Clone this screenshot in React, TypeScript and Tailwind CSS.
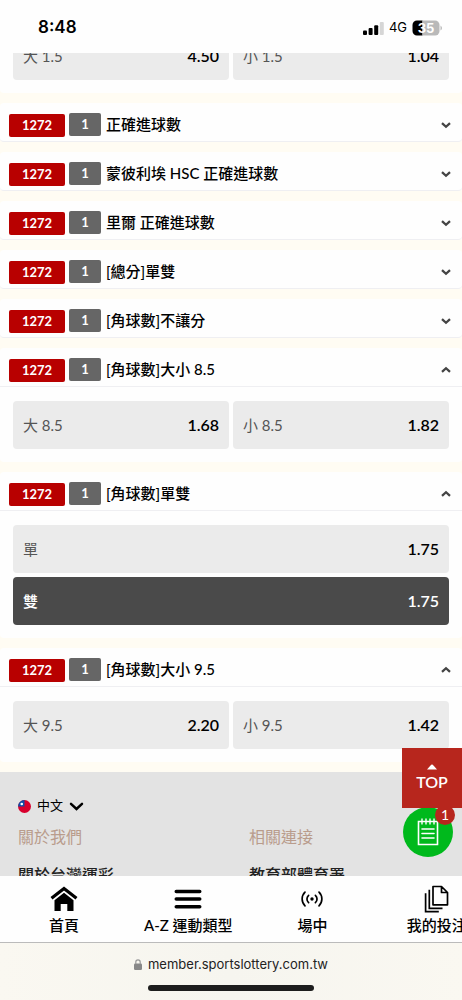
import React from "react";

type Option = { label: string; odds: string; selected?: boolean };
type Market = { title: string; options?: Option[]; stacked?: boolean };

const markets: Market[] = [
  { title: "正確進球數" },
  { title: "蒙彼利埃 HSC 正確進球數" },
  { title: "里爾 正確進球數" },
  { title: "[總分]單雙" },
  { title: "[角球數]不讓分" },
  {
    title: "[角球數]大小 8.5",
    options: [
      { label: "大 8.5", odds: "1.68" },
      { label: "小 8.5", odds: "1.82" },
    ],
  },
  {
    title: "[角球數]單雙",
    stacked: true,
    options: [
      { label: "單", odds: "1.75" },
      { label: "雙", odds: "1.75", selected: true },
    ],
  },
  {
    title: "[角球數]大小 9.5",
    options: [
      { label: "大 9.5", odds: "2.20" },
      { label: "小 9.5", odds: "1.42" },
    ],
  },
];

function StatusBar() {
  return (
    <header className="flex h-[53px] shrink-0 items-center justify-between bg-[#fefefe] pt-[3px] pr-5 pl-[38px] font-['Inter',sans-serif]">
      <span className="text-[17px] font-semibold text-black">8:48</span>
      <div className="flex items-center gap-[5px]">
        <svg width="21" height="13" viewBox="0 0 21 13" aria-hidden="true">
          <rect x="0" y="8.5" width="4" height="4.5" rx="1" />
          <rect x="5.6" y="6" width="4" height="7" rx="1" />
          <rect x="11.2" y="3.2" width="4" height="9.8" rx="1" />
          <rect x="16.8" y="0" width="4" height="13" rx="1" fill="#d6d6d6" />
        </svg>
        <span className="text-[13px] text-black">4G</span>
        <svg width="30" height="16" viewBox="0 0 30 16" role="img" aria-label="35%">
          <path d="M5 .5h5.500v15H5A4.500 4.500 0 0 1 .5 11V5A4.500 4.500 0 0 1 5 .5z" fill="#000" />
          <path d="M10.500.5H23A4.500 4.500 0 0 1 27.500 5v6a4.500 4.500 0 0 1-4.500 4.500H10.500z" fill="#b9b9b9" />
          <path d="M28.500 5.500q1.500 1 1.500 2.500t-1.500 2.500z" fill="#b9b9b9" />
          <text x="14" y="12.600" textAnchor="middle" fontSize="13" fontWeight="700" fill="#fff">
            35
          </text>
        </svg>
      </div>
    </header>
  );
}

function Chevron({ up = false }: { up?: boolean }) {
  return (
    <svg width="10" height="8" viewBox="0 0 10 8" fill="none" stroke="#444" strokeWidth="2.300" aria-hidden="true">
      <path d={up ? "M1 5.800 5 2.200 9 5.800" : "M1 2.200 5 5.800 9 2.200"} />
    </svg>
  );
}

function Options({ options, stacked }: { options: Option[]; stacked?: boolean }) {
  return (
    <div className={`grid gap-1 px-[13px] pb-[13px] ${stacked ? "grid-cols-1" : "grid-cols-2"}`}>
      {options.map((o) => (
        <button
          key={o.label}
          type="button"
          className={`flex h-12 items-center justify-between rounded px-2.5 text-[15px] ${
            o.selected ? "bg-[#4a4a4a] font-medium text-white" : "bg-[#ebebeb] text-[#555]"
          }`}
        >
          <span>{o.label}</span>
          <span className={`text-base font-semibold ${o.selected ? "text-white" : "text-black"}`}>{o.odds}</span>
        </button>
      ))}
    </div>
  );
}

function MarketCard({ market }: { market: Market }) {
  const open = Boolean(market.options);
  return (
    <section className="rounded bg-[#fefefe]">
      <button
        type="button"
        aria-expanded={open}
        className={`flex h-[39px] w-full items-center border-b border-[#efeff2] pt-[5px] pr-[11px] pl-[9px] ${open ? "" : "rounded"}`}
      >
        <span className="mt-0.5 flex h-[23px] w-14 items-center justify-center rounded-xs bg-[#b80000] text-[13px] font-bold text-white">
          1272
        </span>
        <span className="ml-1 flex h-[23px] w-8 items-center justify-center rounded-xs bg-[#666] text-[13px] font-bold text-white">
          1
        </span>
        <span className="ml-[5px] flex-1 text-left text-[15px] font-medium text-black">{market.title}</span>
        <Chevron up={open} />
      </button>
      {market.options && (
        <div className="pt-3.5">
          <Options options={market.options} stacked={market.stacked} />
        </div>
      )}
    </section>
  );
}

function SiteFooter() {
  return (
    <footer className="bg-[#e3e3e3] pt-6 pb-10">
      <button type="button" className="ml-[18px] flex h-5 items-center text-[13px] text-black">
        <svg width="13" height="13" viewBox="0 0 26 26" aria-hidden="true">
          <circle cx="13" cy="13" r="13" fill="#d8002d" />
          <path d="M0 13A13 13 0 0 1 13 0v13z" fill="#0f4fa8" />
          <circle cx="7.500" cy="8" r="2.600" fill="#fff" />
        </svg>
        <span className="mx-1.5">中文</span>
        <svg width="15" height="9" viewBox="0 0 15 9" fill="none" stroke="#000" strokeWidth="2.500" strokeLinecap="round" aria-hidden="true">
          <path d="M2 1.800 7.500 7 13 1.800" />
        </svg>
      </button>
      <div className="mt-[9px] grid grid-cols-2 text-base leading-6">
        <div className="px-[18px]">
          <h2 className="text-[#b99c8c]">關於我們</h2>
          <a href="#about" className="mt-3.5 block font-medium text-[#222]">關於台灣運彩</a>
        </div>
        <div className="px-[18px]">
          <h2 className="text-[#b99c8c]">相關連接</h2>
          <a href="#links" className="mt-3.5 block font-medium text-[#222]">教育部體育署</a>
        </div>
      </div>
    </footer>
  );
}

function FloatingActions() {
  return (
    <>
      <button
        type="button"
        aria-label="投注單"
        className="absolute right-[9px] bottom-[19px] flex size-[50px] items-center justify-center rounded-full bg-[#00b91c]"
      >
        <svg width="22" height="28" viewBox="0 0 22 28" fill="none" stroke="#fff" strokeWidth="1.600" aria-hidden="true">
          <path d="M1.500 3.500h19v23h-19z" />
          <path d="M5 .5v6M9 .5v6M13 .5v6M17 .5v6" strokeWidth="1.400" />
          <path d="M5 11h12M5 15.500h12M5 20h12" strokeLinecap="round" />
        </svg>
        <span className="absolute -top-0.5 -right-0.5 flex size-5 items-center justify-center rounded-full bg-[#b7261d] text-sm text-white">
          1
        </span>
      </button>
      <a
        href="#top"
        className="absolute right-0 bottom-[68px] flex size-[60px] flex-col items-center justify-center bg-[#b7261d] pt-0.5 text-base leading-6 font-semibold text-white"
      >
        <svg width="10" height="6" viewBox="0 0 10 6" fill="#fff" aria-hidden="true">
          <path d="M0 5.500 4.200.8q.8-.8 1.600 0L10 5.500z" />
        </svg>
        TOP
      </a>
    </>
  );
}

const navItems = [
  {
    label: "首頁",
    icon: (
      <svg width="28" height="26" viewBox="0 0 28 26" aria-hidden="true">
        <path d="M1.500 12.300 14 2.600l12.500 9.700" fill="none" stroke="#000" strokeWidth="3.200" />
        <path d="M4.500 14.200 14 6.800l9.500 7.400V25h-6.200v-7h-6.600v7H4.500z" />
      </svg>
    ),
  },
  {
    label: "A-Z 運動類型",
    icon: (
      <svg width="28" height="26" viewBox="0 0 28 26" stroke="#000" strokeWidth="3.600" strokeLinecap="round" aria-hidden="true">
        <path d="M2.300 5.500h23.400M2.300 13h23.400M2.300 20.700h23.400" />
      </svg>
    ),
  },
  {
    label: "場中",
    icon: (
      <svg width="28" height="26" viewBox="0 0 28 26" fill="none" stroke="#000" strokeWidth="1.700" strokeLinecap="round" aria-hidden="true">
        <circle cx="14" cy="13" r="1.700" fill="#000" stroke="none" />
        <path d="M10.600 9.300a5 5 0 0 0 0 7.400M17.400 9.300a5 5 0 0 1 0 7.400M7 6.200a9.500 9.500 0 0 0 0 13.600M21 6.200a9.500 9.500 0 0 1 0 13.600" />
      </svg>
    ),
  },
  {
    label: "我的投注",
    icon: (
      <svg width="28" height="28" viewBox="0 0 28 28" fill="none" stroke="#000" strokeWidth="1.700" aria-hidden="true">
        <path d="M10 1.500h8.500l6 6v12.300H10zM18.500 1.500v6h6" strokeLinejoin="round" />
        <path d="M6.300 4.800v18.500h13.200M2.600 8.200v18.500h13.200" />
      </svg>
    ),
  },
];

function BottomNav() {
  return (
    <nav className="flex h-[67px] shrink-0 overflow-hidden border-b border-[#bbb] bg-[#fefefe] pl-0.5">
      {navItems.map((item) => (
        <a
          key={item.label}
          href="#nav"
          className="flex w-[27%] shrink-0 flex-col items-center pt-[9px] text-[15px] leading-6 font-medium whitespace-nowrap text-black"
        >
          <span className="flex h-7 items-center">{item.icon}</span>
          {item.label}
        </a>
      ))}
    </nav>
  );
}

function BrowserBar() {
  return (
    <div className="flex h-[57px] shrink-0 flex-col items-center bg-linear-to-r from-[#faf8f1] via-[#f6f5ef] to-[#faf8f1] pt-[11px] font-['Inter',sans-serif]">
      <div className="flex items-center gap-1.5 text-[13px] leading-5 text-[#222]">
        <svg width="8" height="11" viewBox="0 0 8 11" aria-hidden="true">
          <rect x="0" y="4.600" width="8" height="6.400" rx="1.200" fill="#888" />
          <path d="M1.800 5V3a2.200 2.200 0 0 1 4.400 0v2" fill="none" stroke="#999" strokeWidth="1.200" />
        </svg>
        <span>member.sportslottery.com.tw</span>
      </div>
      <div className="mt-[11px] h-1.5 w-[166px] rounded-full bg-[#1d1d1d]" />
    </div>
  );
}

export default function App() {
  return (
    <div className="flex h-screen flex-col overflow-hidden bg-[#fefefe] font-['Lato','Noto_Sans_CJK_TC',sans-serif]">
      <StatusBar />
      <div className="relative min-h-0 flex-1">
        <main className="h-full overflow-hidden bg-[#fffcf3]">
          <div className="-mt-[21px] flex flex-col gap-2.5 pb-2.5">
            <section className="rounded bg-[#fefefe]">
              <Options
                options={[
                  { label: "大 1.5", odds: "4.50" },
                  { label: "小 1.5", odds: "1.04" },
                ]}
              />
            </section>
            {markets.map((m) => (
              <MarketCard key={m.title} market={m} />
            ))}
          </div>
          <SiteFooter />
        </main>
        <FloatingActions />
      </div>
      <BottomNav />
      <BrowserBar />
    </div>
  );
}
